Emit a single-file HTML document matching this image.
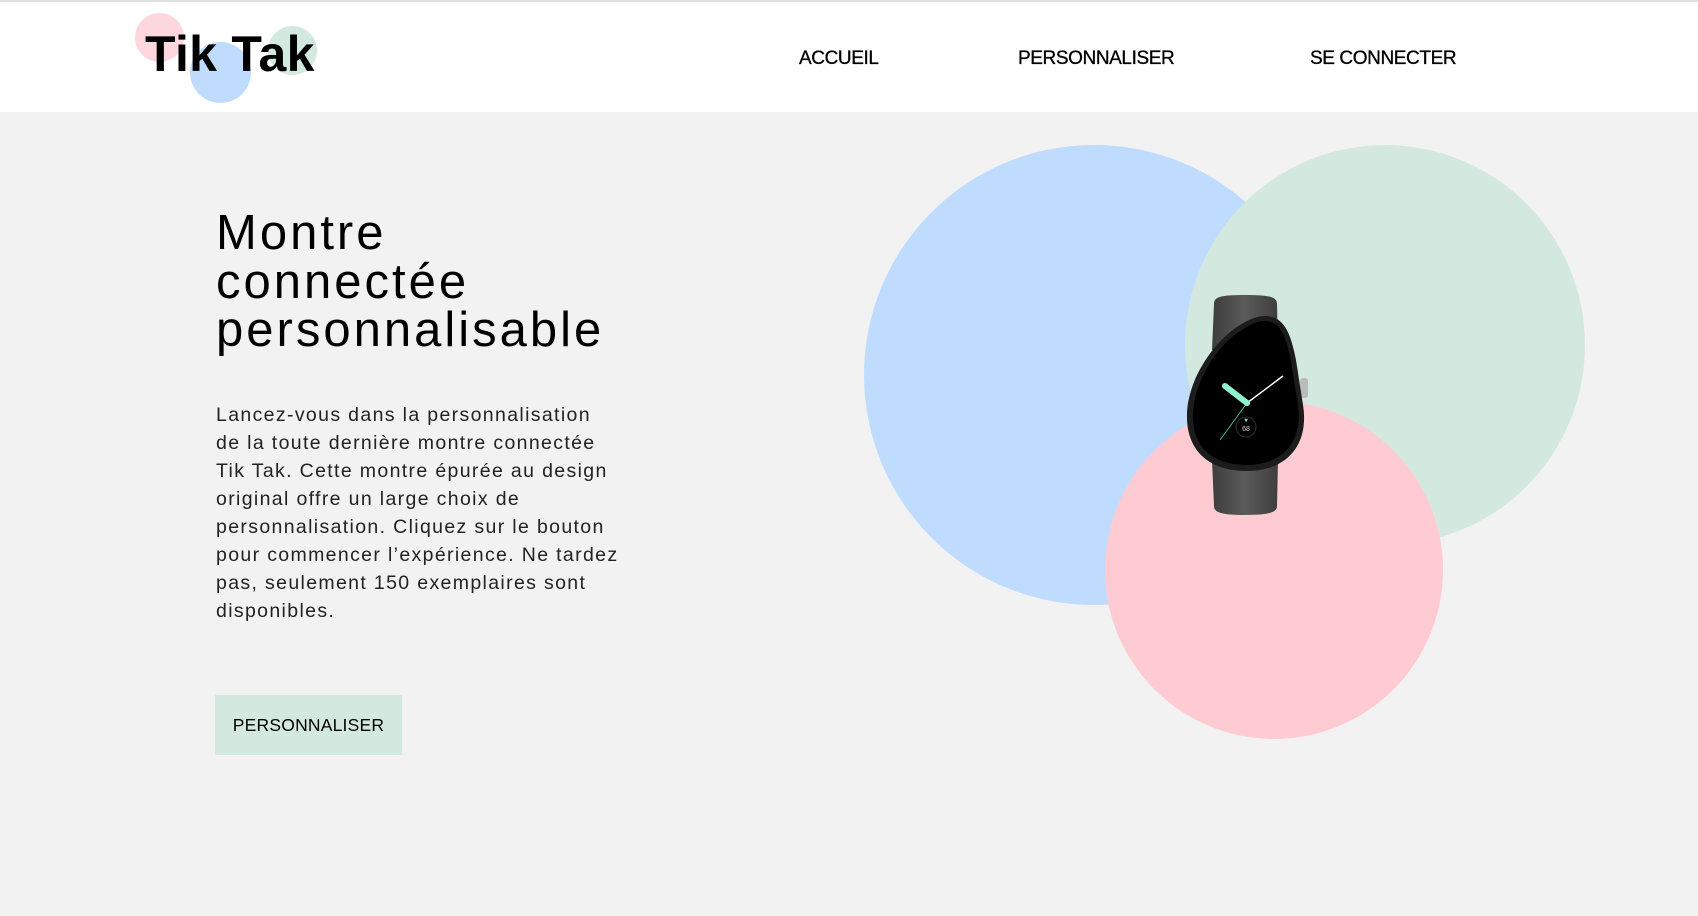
<!DOCTYPE html>
<html><head><meta charset="utf-8"><style>
*{margin:0;padding:0;box-sizing:border-box}
html,body{width:1698px;height:916px;overflow:hidden;background:#f2f2f2;font-family:"Liberation Sans",sans-serif;color:#000}
.hdr{position:absolute;left:0;top:0;width:1698px;height:112px;background:#fff;border-top:2px solid #e0e0e0}
.c{position:absolute;border-radius:50%}
.logo{position:absolute;left:145px;top:22px;font-size:50px;font-weight:bold;letter-spacing:0.3px;line-height:60px}
.nav{position:absolute;top:45px;font-size:19px;line-height:24px;white-space:nowrap;letter-spacing:-0.4px;-webkit-text-stroke:0.3px #000}
h1{position:absolute;left:216px;top:209px;font-size:49px;font-weight:normal;line-height:48.5px;letter-spacing:3px}
p{position:absolute;left:216px;top:401px;font-size:19.5px;line-height:28px;color:#222;white-space:nowrap;letter-spacing:1.35px}
.btn{position:absolute;left:215px;top:695px;width:187px;height:60px;background:#d3e9e0;font-size:17.5px;line-height:60px;text-align:center;letter-spacing:0.2px}
</style></head><body>
<div class="hdr">
<div class="c" style="left:135px;top:11px;width:49px;height:49px;background:#fdd7dd"></div>
<div class="c" style="left:190px;top:40px;width:61px;height:61px;background:#bfdcfe"></div>
<div class="c" style="left:268px;top:24px;width:49px;height:49px;background:#d3e9e0"></div>
<div class="logo">Tik Tak</div>
<div class="nav" style="left:799px">ACCUEIL</div>
<div class="nav" style="left:1018px">PERSONNALISER</div>
<div class="nav" style="left:1310px">SE CONNECTER</div>
</div>
<h1>Montre<br>connectée<br>personnalisable</h1>
<p>Lancez-vous dans la personnalisation<br>de la toute dernière montre connectée<br>Tik Tak. Cette montre épurée au design<br>original offre un large choix de<br>personnalisation. Cliquez sur le bouton<br>pour commencer l’expérience. Ne tardez<br>pas, seulement 150 exemplaires sont<br>disponibles.</p>
<div class="btn">PERSONNALISER</div>
<div class="c" style="left:864px;top:145px;width:460px;height:460px;background:#bfdcfe"></div>
<div class="c" style="left:1185px;top:145px;width:400px;height:400px;background:#d3e9e0"></div>
<div class="c" style="left:1105px;top:401px;width:338px;height:338px;background:#fecbd3"></div>
<svg style="position:absolute;left:1180px;top:290px" width="140" height="230" viewBox="0 0 140 230">
<defs><linearGradient id="s" x1="0" x2="1"><stop offset="0" stop-color="#3e3e3e"/><stop offset=".5" stop-color="#5a5a5a"/><stop offset="1" stop-color="#3e3e3e"/></linearGradient></defs>
<path d="M34 14 C34 7 40 5 65 5 C90 5 97 7 97 14 L98 60 L32 60 Z M32 170 L98 170 L97 216 C97 222 90 225 65 225 C40 225 34 222 34 216 Z" fill="url(#s)"/>
<rect x="120" y="88" width="8" height="20" rx="3" fill="#bbb"/>
<path d="M85 26 C105 26 111 45 116 70 L123 115 C129 152 110 180 68 181 C28 181 6 160 7 124 C8 88 35 50 60 35 C68 30 77 26 85 26 Z" fill="#1c1c1c"/>
<path d="M85 31 C101 31 106 47 111 71 L118 115 C123 148 106 174 68 175 C31 175 12 156 13 124 C14 90 39 53 62 40 C69 35 77 31 85 31 Z" fill="#000"/>
<line x1="67" y1="113" x2="103" y2="86" stroke="#fff" stroke-width="1.5"/>
<line x1="67" y1="113" x2="40" y2="150" stroke="#3fbf95" stroke-width="1"/>
<line x1="67" y1="113" x2="45" y2="96" stroke="#8ff0cc" stroke-width="6" stroke-linecap="round"/>
<circle cx="67" cy="113" r="3" fill="#8ff0cc"/>
<circle cx="66" cy="137" r="10" fill="none" stroke="#333" stroke-width="1"/>
<text x="66" y="141" font-size="7" fill="#ddd" text-anchor="middle" font-family="Liberation Sans">68</text>
<text x="66" y="132" font-size="6" fill="#8ff0cc" text-anchor="middle">♥</text>
</svg>
</body></html>
